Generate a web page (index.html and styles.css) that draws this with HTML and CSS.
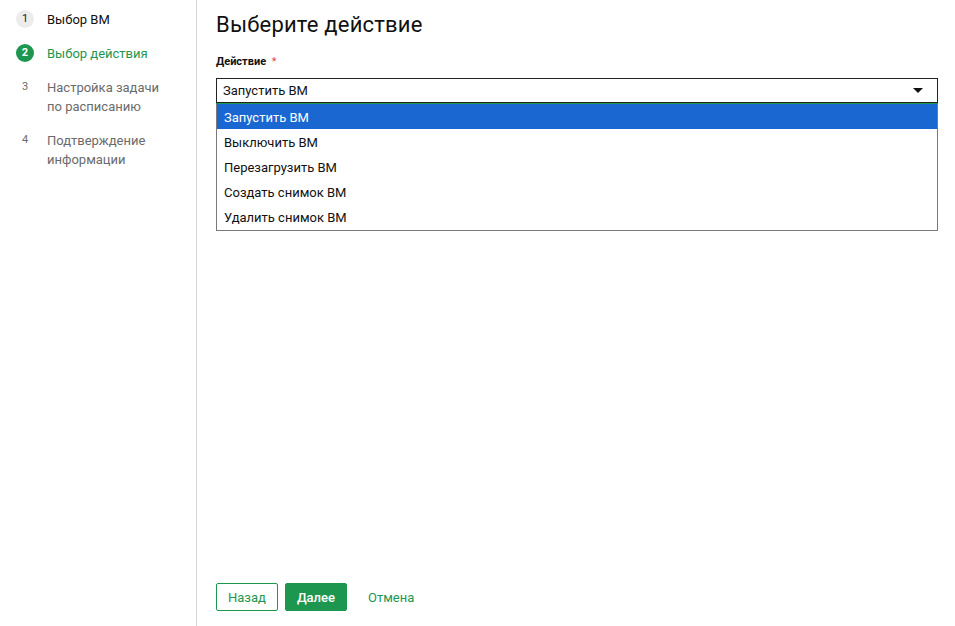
FILE: index.html
```
<!doctype html>
<html>
<head>
<meta charset="utf-8">
<title>Выберите действие</title>
<link rel="stylesheet" href="styles.css">
</head>
<body>
<div class="wrap">
	<ul class="steps">
		<li class="step done"><span class="num">1</span><span class="txt">Выбор ВМ</span></li>
		<li class="step active"><span class="num">2</span><span class="txt">Выбор действия</span></li>
		<li class="step"><span class="num">3</span><span class="txt">Настройка задачи<br>по расписанию</span></li>
		<li class="step"><span class="num">4</span><span class="txt">Подтверждение<br>информации</span></li>
	</ul>
	<div class="main">
		<h1 class="title">Выберите действие</h1>
		<div class="label">Действие <i>*</i></div>
		<div class="select">
			<div class="current">Запустить ВМ<span class="arrow"></span></div>
			<ul class="options">
				<li class="sel">Запустить ВМ</li>
				<li>Выключить ВМ</li>
				<li>Перезагрузить ВМ</li>
				<li>Создать снимок ВМ</li>
				<li>Удалить снимок ВМ</li>
			</ul>
		</div>
		<div class="foot">
			<button class="btn back">Назад</button>
			<button class="btn next">Далее</button>
			<button class="btn cancel">Отмена</button>
		</div>
	</div>
</div>
</body>
</html>
```
FILE: styles.css
```
*{ margin:0; padding:0; list-style:none; box-sizing:border-box;}
body{ font-family:Roboto, "Liberation Sans", sans-serif; font-size:13px; color:#111; background:#fff;}
.wrap{ display:flex; height:626px;}

.steps{ width:197px; border-right:1px solid #d6d6d6; padding:10px 0 0 16px; flex-shrink:0;}
.step{ display:flex; align-items:flex-start; margin-bottom:15px; color:#6b6b6b; line-height:19px;}
.step .num{ width:18px; height:18px; border-radius:50%; font-size:11px; line-height:18px; text-align:center; margin-right:13px; flex-shrink:0;}
.step.done{ color:#111;}
.step.done .num{ background:#ececec; color:#222;}
.step.active{ color:#1d9650;}
.step.active .num{ background:#1d9650; color:#fff; font-weight:bold;}

.main{ flex:1; padding:11px 17px 15px 19px; display:flex; flex-direction:column;}
.title{ font-size:22px; font-weight:normal; line-height:28px; color:#111; letter-spacing:0.2px;}
.label{ font-size:11px; font-weight:bold; margin-top:15px; line-height:16px;}
.label i{ font-style:normal; color:#e04a4a; margin-left:3px; font-weight:normal;}

.select{ margin-top:8px; position:relative;}
.current{ height:26px; border:1px solid #222; border-bottom:2px solid #222; padding:0 6px; line-height:23px; position:relative;}
.current:after{ content:''; position:absolute; left:-1px; right:-1px; bottom:-2px; height:1px; background:#1d9650;}
.arrow{ position:absolute; right:14px; top:9px; border:5px solid transparent; border-top:5px solid #111; border-bottom:0;}
.options{ border:1px solid #7a7a7a; border-top:0; padding-bottom:1px;}
.options li{ height:25px; line-height:27px; padding:0 7px;}
.options li.sel{ background:#1b67d1; color:#fff;}

.foot{ margin-top:auto; display:flex; gap:7px;}
.btn{ font-family:inherit; font-size:13px; height:28px; padding:0 11px; border-radius:2px; border:1px solid #1d9650; background:#fff; color:#1d9650; cursor:pointer;}
.btn.next{ background:#1d9650; color:#fff; font-weight:500;}
.btn.cancel{ border-color:transparent; margin-left:2px;}
```
